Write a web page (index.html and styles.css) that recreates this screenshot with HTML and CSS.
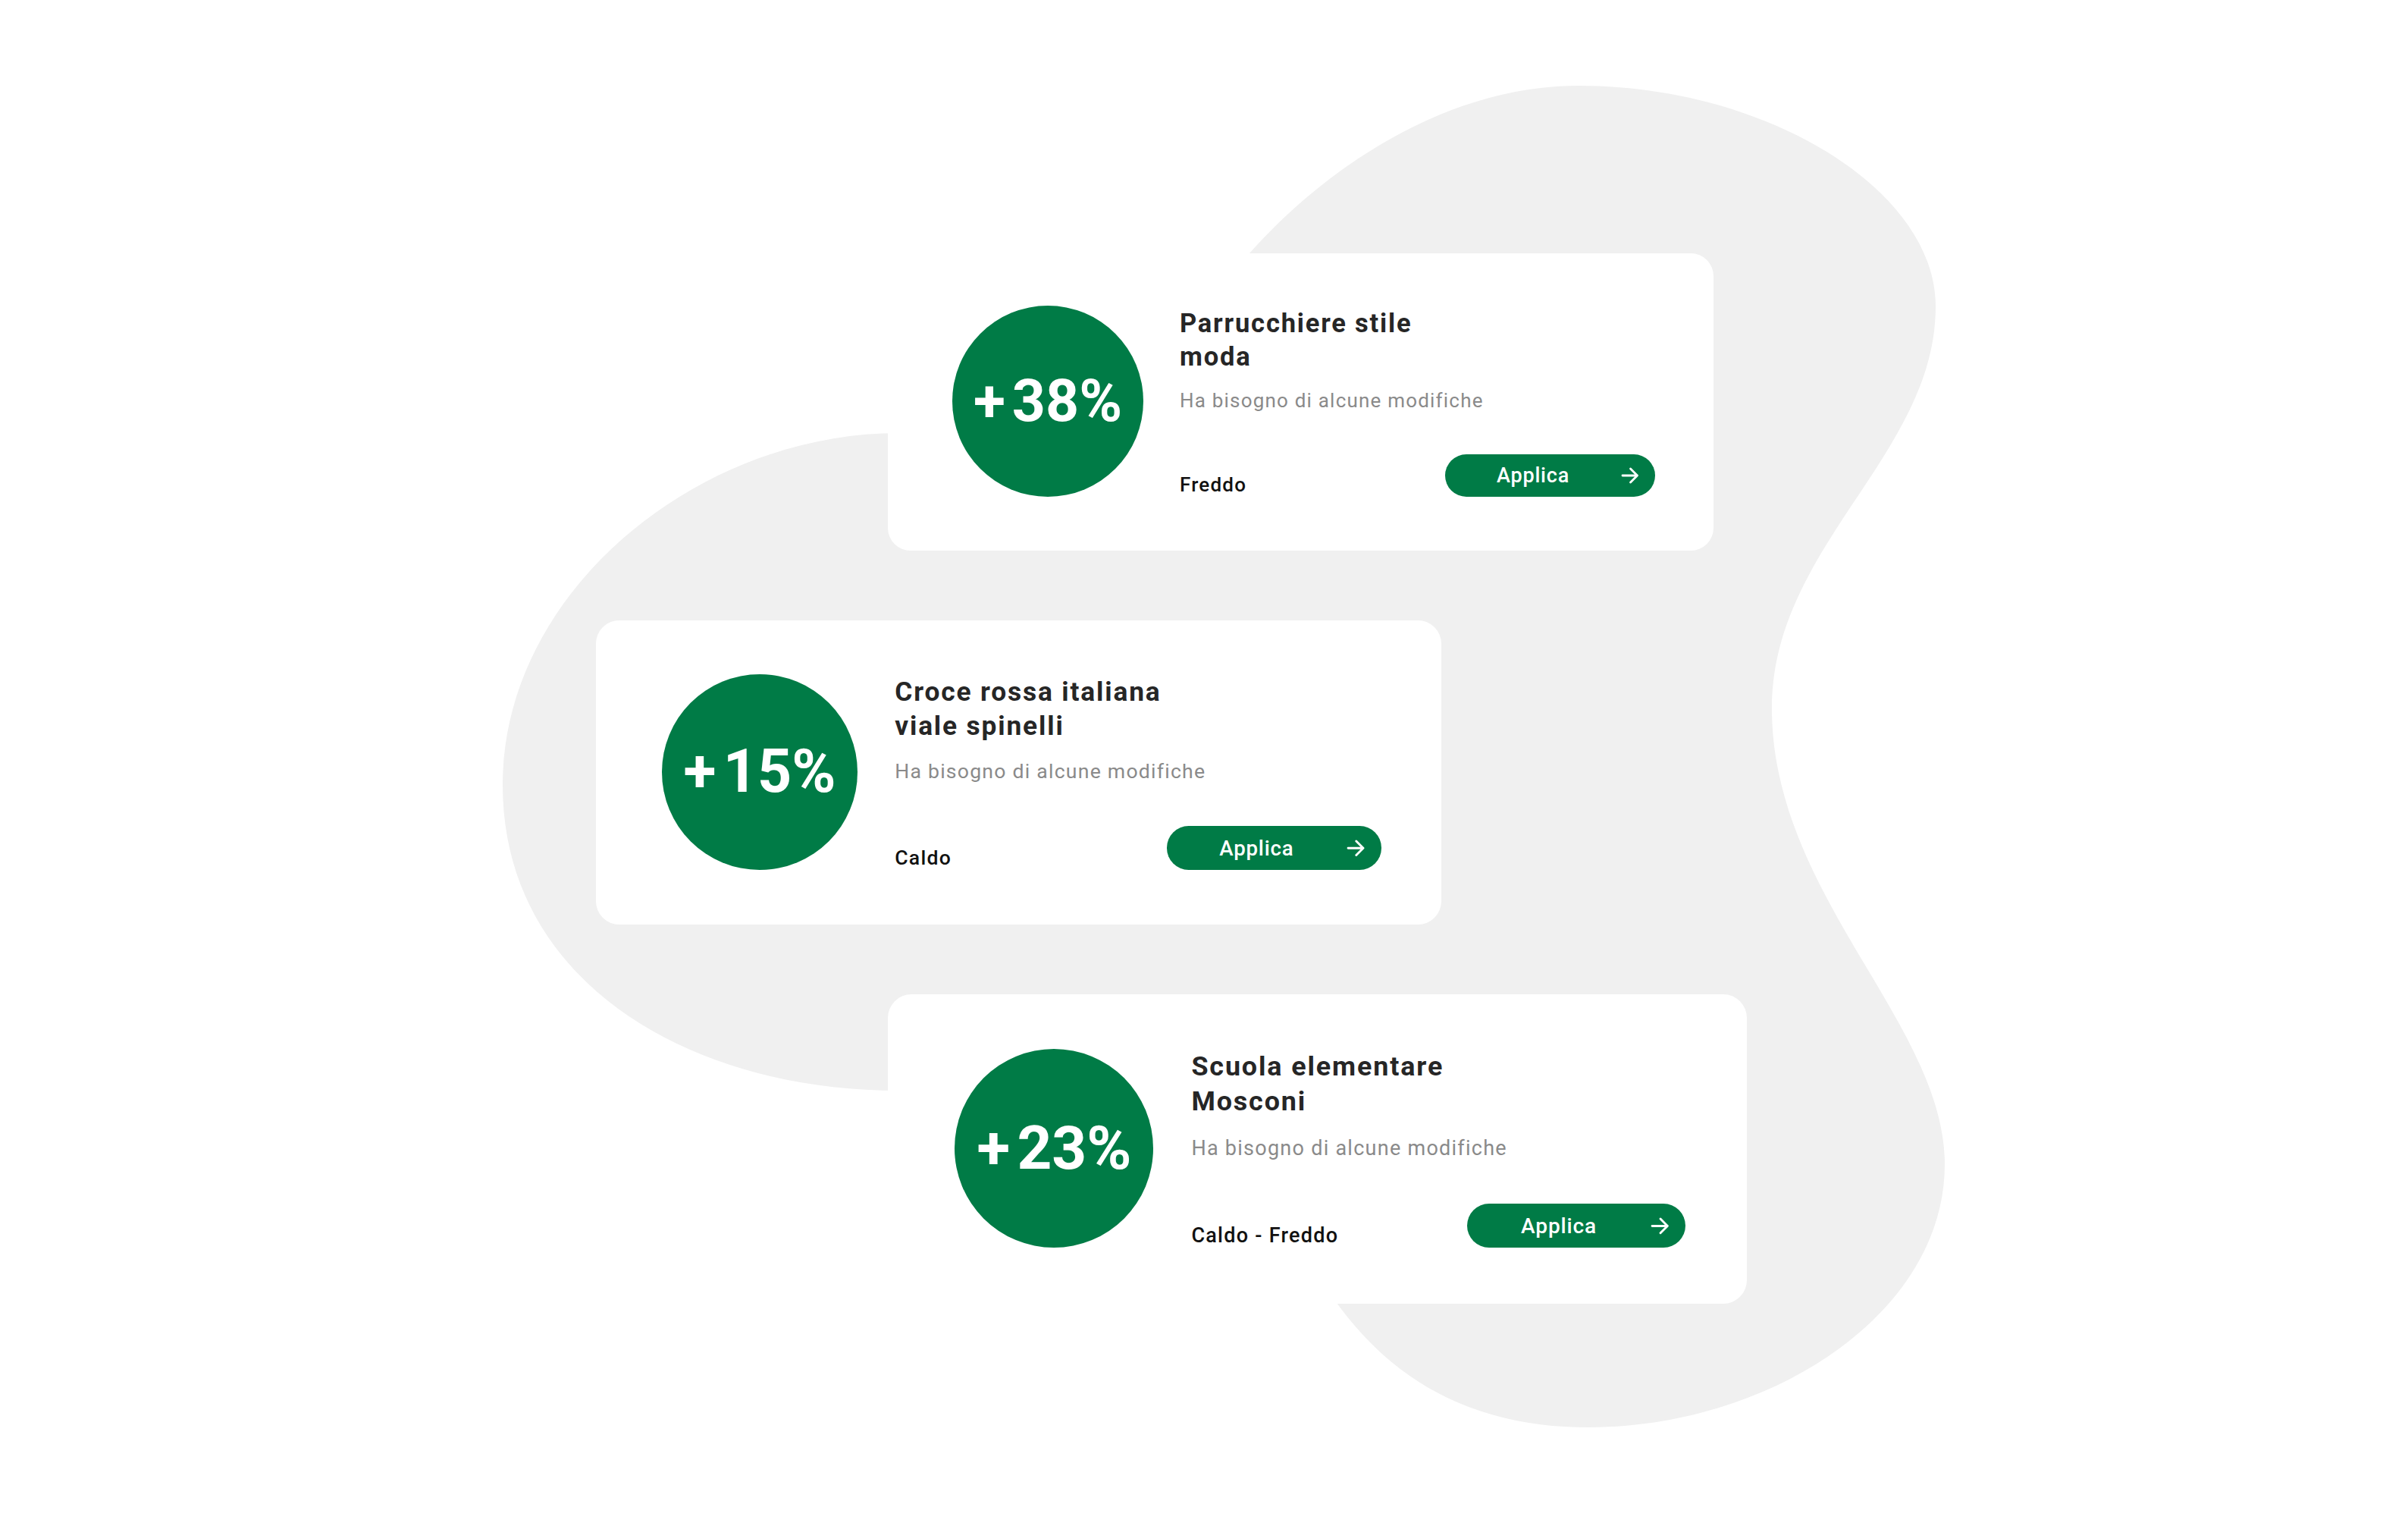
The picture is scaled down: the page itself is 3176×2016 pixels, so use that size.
FILE: index.html
```html
<!DOCTYPE html>
<html lang="it">
<head>
<meta charset="utf-8">
<title>Risparmio</title>
<link rel="stylesheet" href="styles.css">
</head>
<body>
<div class="page">
  <svg class="blob" width="3176" height="2016" viewBox="0 0 3176 2016" aria-hidden="true">
    <path d="M2082 113 C2330 113 2553 250 2553 404 C2553 600 2337 720 2337 934 C2337 1180 2565 1350 2565 1535 C2565 1735 2330 1882 2096 1882 C1930 1882 1830 1810 1763 1718 L1185 1438 C910 1438 663 1295 663 1035 C663 780 920 571 1185 571 L1648 334 C1740 230 1900 113 2082 113 Z" fill="#f0f0f0"/>
  </svg>
  <main class="stack">
    <article class="card card-a">
      <div class="badge"><span class="plus">+</span>38%</div>
      <div class="info">
        <h2 class="title">Parrucchiere stile moda</h2>
        <p class="sub">Ha bisogno di alcune modifiche</p>
        <div class="foot">
          <span class="label">Freddo</span>
          <button class="apply">Applica
            <svg class="arrow" viewBox="0 0 24 22"><path d="M2 11H21.5M12.5 2L21.5 11L12.5 20"/></svg>
          </button>
        </div>
      </div>
    </article>
    <article class="card card-b">
      <div class="badge"><span class="plus">+</span>15%</div>
      <div class="info">
        <h2 class="title">Croce rossa italiana viale spinelli</h2>
        <p class="sub">Ha bisogno di alcune modifiche</p>
        <div class="foot">
          <span class="label">Caldo</span>
          <button class="apply">Applica
            <svg class="arrow" viewBox="0 0 24 22"><path d="M2 11H21.5M12.5 2L21.5 11L12.5 20"/></svg>
          </button>
        </div>
      </div>
    </article>
    <article class="card card-c">
      <div class="badge"><span class="plus">+</span>23%</div>
      <div class="info">
        <h2 class="title">Scuola elementare Mosconi</h2>
        <p class="sub">Ha bisogno di alcune modifiche</p>
        <div class="foot">
          <span class="label">Caldo - Freddo</span>
          <button class="apply">Applica
            <svg class="arrow" viewBox="0 0 24 22"><path d="M2 11H21.5M12.5 2L21.5 11L12.5 20"/></svg>
          </button>
        </div>
      </div>
    </article>
  </main>
</div>
</body>
</html>
```
FILE: styles.css
```css
* { box-sizing: border-box; }

html, body {
  margin: 0;
  padding: 0;
  background: #ffffff;
}

body {
  font-family: Roboto, "Liberation Sans", Arial, sans-serif;
  color: #262626;
}

.page {
  position: relative;
  width: 3176px;
  height: 2016px;
  overflow: hidden;
}

.blob {
  position: absolute;
  left: 0;
  top: 0;
  z-index: 0;
}

.stack {
  position: relative;
  z-index: 1;
  display: flex;
  flex-direction: column;
  align-items: flex-start;
  gap: 92px;
  padding-top: 334px;
}

.card {
  --u: 1px;
  display: flex;
  align-items: stretch;
  background: #ffffff;
  border-radius: calc(30 * var(--u));
  padding: calc(69 * var(--u)) calc(77 * var(--u)) calc(71 * var(--u)) calc(85 * var(--u));
  gap: calc(48 * var(--u));
}

.card-a { --u: 1px; margin-left: 1171px; }
.card-b { --u: 1.024px; margin-left: 786px; }
.card-c { --u: 1.04px; margin-left: 1171px; }

.badge {
  flex: none;
  width: calc(252 * var(--u));
  height: calc(252 * var(--u));
  border-radius: 50%;
  background: #007b46;
  color: #ffffff;
  display: flex;
  align-items: center;
  justify-content: center;
  font-weight: 700;
  font-size: calc(77 * var(--u));
  line-height: 1;
}

.plus {
  margin-right: calc(9 * var(--u));
}

.info {
  width: calc(627 * var(--u));
  display: flex;
  flex-direction: column;
  padding-top: calc(1 * var(--u));
}

.title {
  margin: 0;
  max-width: calc(370 * var(--u));
  font-size: calc(34.5 * var(--u));
  line-height: calc(44 * var(--u));
  letter-spacing: calc(1.8 * var(--u));
  font-weight: 700;
  color: #262626;
}

.sub {
  margin: calc(21 * var(--u)) 0 0;
  font-size: calc(26 * var(--u));
  line-height: calc(31 * var(--u));
  letter-spacing: calc(1.2 * var(--u));
  font-weight: 400;
  color: #8a8a8a;
}

.foot {
  margin-top: auto;
  display: flex;
  align-items: flex-end;
  justify-content: space-between;
}

.label {
  font-size: calc(26 * var(--u));
  line-height: calc(31 * var(--u));
  letter-spacing: calc(1.2 * var(--u));
  font-weight: 500;
  color: #111111;
}

.apply {
  width: calc(277 * var(--u));
  height: calc(56 * var(--u));
  border: 0;
  border-radius: calc(28 * var(--u));
  background: #007b46;
  color: #ffffff;
  font-family: inherit;
  font-size: calc(27 * var(--u));
  letter-spacing: calc(0.8 * var(--u));
  font-weight: 500;
  display: flex;
  align-items: center;
  justify-content: space-between;
  padding: 0 calc(21 * var(--u)) 0 calc(68 * var(--u));
  cursor: pointer;
}

.arrow {
  width: calc(24 * var(--u));
  height: calc(22 * var(--u));
  fill: none;
  stroke: #ffffff;
  stroke-width: 2.8;
  stroke-linecap: round;
  stroke-linejoin: round;
}
```
